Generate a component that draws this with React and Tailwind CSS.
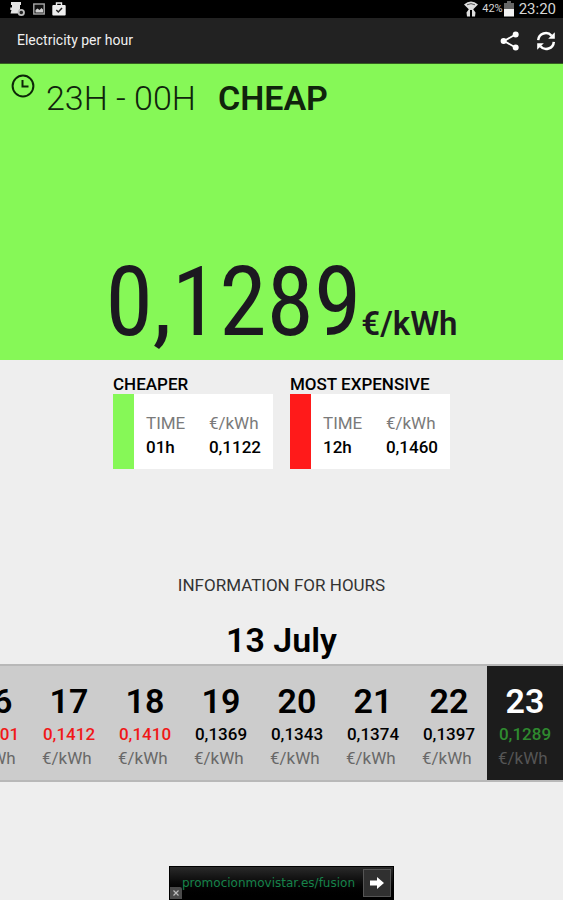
import React from "react";
import clsx from "clsx";

const HOURS = [
  { hour: "16", price: "0,1401", level: "high" },
  { hour: "17", price: "0,1412", level: "high" },
  { hour: "18", price: "0,1410", level: "high" },
  { hour: "19", price: "0,1369", level: "normal" },
  { hour: "20", price: "0,1343", level: "normal" },
  { hour: "21", price: "0,1374", level: "normal" },
  { hour: "22", price: "0,1397", level: "normal" },
  { hour: "23", price: "0,1289", level: "low" },
];

const CURRENT_HOUR = "23";

const PRICE_COLORS = {
  high: "text-[#f01818]",
  normal: "text-black",
  low: "text-[#2f8a2f]",
};

// --- Icons ---
const ClockIcon = () => (
  <svg className="h-6 w-6" viewBox="0 0 24 24" fill="none" stroke="#0d2608" strokeWidth="2" aria-hidden="true">
    <circle cx="12" cy="12" r="10.4" />
    <path d="M11.5 6v6.5h6" />
  </svg>
);

const ShareIcon = () => (
  <svg className="h-5 w-5" viewBox="0 0 20 20" fill="#fff" aria-hidden="true">
    <path d="M15.5 3.5 4 10l11.5 6.5" fill="none" stroke="#fff" strokeWidth="1.8" />
    <circle cx="15.7" cy="3.6" r="3" />
    <circle cx="3.6" cy="10" r="3" />
    <circle cx="15.7" cy="16.4" r="3" />
  </svg>
);

const RefreshIcon = () => (
  <svg className="h-5 w-5" viewBox="0 0 20 20" fill="none" stroke="#fff" strokeWidth="2.5" aria-hidden="true">
    <path d="M2.2 9.2A7.6 7.6 0 0 1 15.6 4.8" />
    <path d="M17.8 10.8A7.6 7.6 0 0 1 4.4 15.2" />
    <path d="M18.8 1.2v6.6h-6.6z" fill="#fff" stroke="none" />
    <path d="M1.2 18.8v-6.6h6.6z" fill="#fff" stroke="none" />
  </svg>
);

const StatusBar = () => (
  <div className="flex h-[18px] items-center justify-between bg-black pr-[7px] pl-[10px]">
    <div className="flex items-center gap-[7px]">
      <svg className="h-4 w-4" viewBox="0 0 16 16" fill="#e4e4e4" aria-hidden="true">
        <path d="M1 1h10v3H10v4l-2 4.500H.5L1.500 9H.3V6.500H2V4H1z" />
        <circle cx="11.300" cy="11.500" r="2.700" fill="#222" stroke="#bdbdbd" strokeWidth="1.800" />
      </svg>
      <svg className="h-3 w-3" viewBox="0 0 12 12" aria-hidden="true">
        <rect x=".8" y="1" width="10.400" height="10" fill="#111" stroke="#a8a8a8" strokeWidth="1.400" />
        <path d="M2.500 9.500V7l2-1.500 2 1.500 2-2 1.500 1.500v3z" fill="#d0d0d0" />
      </svg>
      <svg className="h-[14px] w-[14px]" viewBox="0 0 14 14" aria-hidden="true">
        <path d="M4.500 3.500V1h5v2.500" fill="none" stroke="#eee" strokeWidth="1.400" />
        <rect x=".3" y="3" width="13.400" height="10.600" rx="1" fill="#eee" />
        <path d="m4.300 8 2 2L10 6" fill="none" stroke="#222" strokeWidth="1.500" />
      </svg>
    </div>
    <div className="flex items-center text-[#d6d6d6]">
      <svg className="mr-[3px] h-4 w-4" viewBox="0 0 16 16" aria-hidden="true">
        <path d="M1 3.500Q8-2.500 15 3.500L9.500 9h-3z" fill="#ddd" />
        <path d="M4 3.800q4-2.300 8 0" fill="none" stroke="#555" strokeWidth="1" />
        <path d="M6 8 3.500 11.500l.5 4h3V8zM10 8l2.500 3.500-.5 4H9V8z" fill="#ddd" />
      </svg>
      <span className="text-[11px] leading-4">42%</span>
      <svg className="mr-1 h-4 w-3" viewBox="0 0 12 16" aria-hidden="true">
        <path d="M4 0h4v2h3v6H1V2h3z" fill="#666" />
        <path d="M1 8h10v7.500H1z" fill="#f2f2f2" />
      </svg>
      <span className="text-[15px] leading-4">23:20</span>
    </div>
  </div>
);

const AppBar = () => (
  <header className="flex h-[46px] items-center justify-between border-b border-[#35601f] bg-[#222] pr-[7px] pl-[17px]">
    <h1 className="text-[14px] text-[#f0f0f0]">Electricity per hour</h1>
    <div className="flex items-center gap-4">
      <button type="button" aria-label="Share">
        <ShareIcon />
      </button>
      <button type="button" aria-label="Refresh">
        <RefreshIcon />
      </button>
    </div>
  </header>
);

const CurrentPrice = () => (
  <section className="flex h-[296px] flex-col justify-between bg-[#86f857] text-[#1c1820]">
    <div className="flex items-start pt-[10px] pl-[11px]">
      <ClockIcon />
      <p className="ml-[11px] pt-1 text-[34px] leading-10 font-light whitespace-pre text-[#10240c]">23H - 00H</p>
      <p className="ml-[22px] pt-1 text-[34px] leading-10 font-semibold text-[#10240c]">CHEAP</p>
    </div>
    <p className="flex items-baseline justify-center pb-1">
      <span className="font-['Roboto_Condensed','Liberation_Sans_Narrow',Roboto,sans-serif] text-[96px] leading-[108px]">
        0,1289
      </span>
      <span className="text-[33px] font-semibold">€/kWh</span>
    </p>
  </section>
);

const PriceCard = ({ title, time, price, barClass }) => (
  <div className="w-40">
    <h2 className="text-[17px] leading-5 font-medium whitespace-nowrap text-black">{title}</h2>
    <div className="flex h-[75px] bg-white">
      <div className={clsx("w-[21px]", barClass)} />
      <dl className="flex flex-1 items-center justify-between px-3 text-[17px] leading-6">
        <div className="pt-[6px]">
          <dt className="text-[#7a7a7a]">TIME</dt>
          <dd className="font-medium text-black">{time}</dd>
        </div>
        <div className="pt-[6px]">
          <dt className="text-[#7a7a7a]">€/kWh</dt>
          <dd className="font-medium text-black">{price}</dd>
        </div>
      </dl>
    </div>
  </div>
);

const HourCell = ({ hour, price, level, active }) => (
  <li className={clsx("flex w-[76px] shrink-0 flex-col px-[11px] pt-[15px] pb-[10px]", active && "bg-[#1c1c1c]")}>
    <span className={clsx("text-center text-[34px] leading-10 font-semibold", active ? "text-white" : "text-black")}>
      {hour}
    </span>
    <span className={clsx("pt-[1px] text-center text-[17px] leading-6 font-medium", PRICE_COLORS[level])}>{price}</span>
    <span className={clsx("text-[17px] leading-6", active ? "text-[#555]" : "text-[#686868]")}>€/kWh</span>
  </li>
);

const AdBanner = () => (
  <div className="relative mx-auto mt-auto flex h-[34px] w-[225px] items-center justify-end border border-black bg-gradient-to-b from-[#2a2a2a] to-black pr-[2px]">
    <a href="#fusion" className="flex items-center gap-2 text-[12px] text-[#16834a]">
      <span className="font-['DejaVu_Sans',sans-serif]">promocionmovistar.es/fusion</span>
      <span className="flex h-7 w-7 items-center justify-center border border-[#555] bg-[#303030]">
        <svg className="h-3 w-[14px]" viewBox="0 0 14 12" fill="#fff" aria-hidden="true">
          <path d="M0 3.500h7V0l7 6-7 6V8.500H0z" />
        </svg>
      </span>
    </a>
    <button
      type="button"
      aria-label="Close ad"
      className="absolute bottom-0 left-0 flex h-3 w-3 items-center justify-center rounded-tr-xs bg-[#4a4a4a]"
    >
      <svg className="h-2 w-2" viewBox="0 0 8 8" stroke="#bbb" strokeWidth="1.200" aria-hidden="true">
        <path d="m1.500 1.500 5 5M6.500 1.500l-5 5" />
      </svg>
    </button>
  </div>
);

const App = () => {
  return (
    <div className="flex min-h-screen flex-col overflow-hidden bg-[#eee] font-[Roboto,sans-serif]">
      <StatusBar />
      <AppBar />
      <main>
        <CurrentPrice />

        {/* Cheapest and most expensive hour of the day */}
        <section className="flex justify-center gap-[17px] pt-[14px]">
          <PriceCard title="CHEAPER" time="01h" price="0,1122" barClass="bg-[#86f857]" />
          <PriceCard title="MOST EXPENSIVE" time="12h" price="0,1460" barClass="bg-[#ff1a1a]" />
        </section>

        <section className="pt-[106px]">
          <p className="text-center text-[17px] leading-5 text-[#333]">INFORMATION FOR HOURS</p>
          <h2 className="pt-[25px] text-center text-[34px] leading-10 font-semibold text-black">13 July</h2>

          <ul className="mt-1 flex justify-end overflow-hidden border-y-2 border-[#b8b8b8] bg-[#ccc]">
            {HOURS.map((item) => (
              <HourCell key={item.hour} {...item} active={item.hour === CURRENT_HOUR} />
            ))}
          </ul>
        </section>
      </main>
      <AdBanner />
    </div>
  );
};

export default App;
